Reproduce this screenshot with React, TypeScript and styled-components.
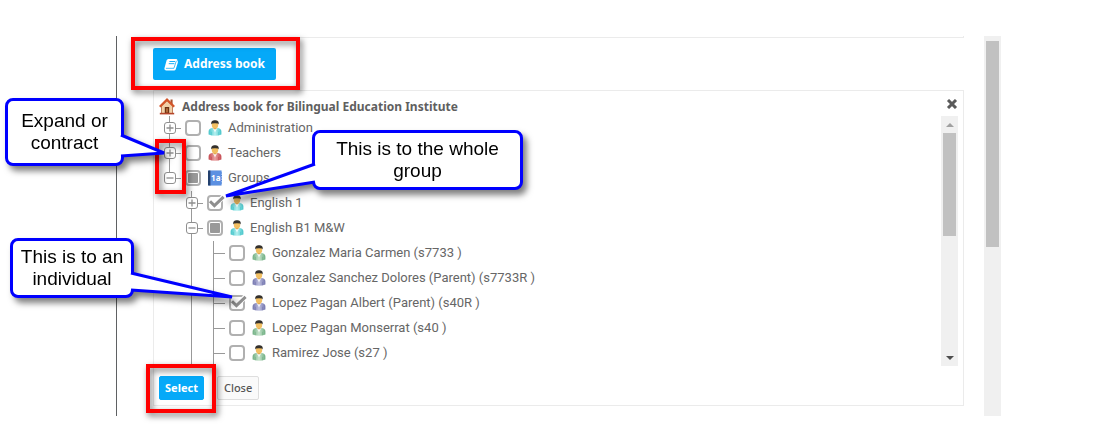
import React, { useId } from 'react';
import styled, { createGlobalStyle, css } from 'styled-components';

const GlobalStyle = createGlobalStyle`
  *, *::before, *::after { box-sizing: border-box; }
  body { margin: 0; background: #fff; }
`;

const headingFont = '"Noto Sans", "Open Sans", sans-serif';
const treeFont = 'Roboto, "Noto Sans", sans-serif';
const accent = '#05a9f8';
const line = '#ebebeb';
const guide = '#999';

const Page = styled.div`
  position: relative;
  padding: 36px 101px 31px 116px;
`;

const Frame = styled.div`
  display: flex;
  gap: 20px;
  padding-left: 36px;
  border-left: 1px solid #5f6163;
`;

const Main = styled.main`
  flex: 1;
  min-width: 0;
  padding-bottom: 10px;
`;

const Rule = styled.div`
  height: 2px;
  border-right: 1px solid ${line};
  border-bottom: 1px solid ${line};
`;

const AddressButton = styled.button`
  display: flex;
  align-items: center;
  gap: 6px;
  height: 32px;
  margin: 10px 0;
  padding: 0 11px;
  border: 0;
  border-radius: 2px;
  background: ${accent};
  color: #fff;
  font: 700 12px/16px ${headingFont};
  cursor: pointer;
`;

const Panel = styled.section`
  padding: 0 5px 5px;
  border: 1px solid ${line};
`;

const PanelHeader = styled.header`
  display: flex;
  align-items: center;
  gap: 7px;
  height: 25px;
  padding-top: 6px;
`;

const PanelTitle = styled.h1`
  flex: 1;
  margin: 0;
  color: #5f5f5f;
  font: 700 12px/20px ${headingFont};
`;

const CloseIconButton = styled.button`
  display: flex;
  align-items: center;
  height: 20px;
  padding: 0 0 6px;
  border: 0;
  background: none;
  cursor: pointer;
`;

const TreeArea = styled.div`
  display: flex;
`;

const Tree = styled.ul`
  flex: 1;
  margin: 0;
  padding: 0;
  list-style: none;
`;

const Row = styled.li`
  display: flex;
  align-items: center;
  height: 25px;
`;

type Guide = 'none' | 'line' | 'branch' | 'last';

const GuideCell = styled.span<{ $kind: Guide }>`
  display: flex;
  align-items: center;
  width: 22px;
  height: 25px;
  padding: 0 0 1px 5px;
  background-repeat: no-repeat;
  ${({ $kind }) =>
    $kind !== 'none' &&
    css`
      background-image: linear-gradient(${guide}, ${guide})${$kind !== 'line' && css`, linear-gradient(${guide}, ${guide})`};
      background-size: 1px ${$kind === 'last' ? '50%' : '100%'}, 11px 1px;
      background-position: 10px 0, 11px 12px;
    `}
`;

const Expander = styled.button`
  display: flex;
  align-items: center;
  justify-content: center;
  width: 12px;
  height: 12px;
  padding: 0;
  border: 1px solid #8f8f8f;
  border-radius: 3px;
  background: #fff;
  cursor: pointer;
`;

const CheckWrap = styled.span`
  position: relative;
  display: flex;
  margin: 0 6px 1px 4px;
`;

const CheckBox = styled.input<{ $partial: boolean }>`
  appearance: none;
  width: 16px;
  height: 16px;
  margin: 0;
  border: 2px solid #b0b0b0;
  border-radius: 4px;
  background: #fff;
  ${({ $partial }) =>
    $partial &&
    css`
      padding: 1px;
      background: #999 content-box;
    `}
`;

const CheckMark = styled.svg`
  position: absolute;
  top: 0;
  left: 0;
  overflow: visible;
  pointer-events: none;
`;

const RowLabel = styled.label`
  display: flex;
  align-items: center;
  gap: 5px;
  padding-bottom: 1px;
  color: #666;
  font: 400 13px/24px ${treeFont};
  white-space: nowrap;
`;

const ScrollTrack = styled.div<{ $start: number }>`
  display: flex;
  flex-direction: column;
  align-items: center;
  width: 17px;
  padding-top: ${({ $start }) => $start}px;
  background: #f0f0f0;
`;

const Thumb = styled.div<{ $share: number }>`
  width: 13px;
  height: ${({ $share }) => $share}%;
  background: #c1c1c1;
`;

const Arrow = styled.div<{ $down?: boolean }>`
  display: flex;
  align-items: center;
  height: 17px;
  ${({ $down }) => $down && 'margin-top: auto;'}
`;

const Footer = styled.footer`
  display: flex;
  gap: 13px;
  padding-top: 10px;
`;

const FooterButton = styled.button<{ $primary?: boolean }>`
  height: 24px;
  padding: 0 ${({ $primary }) => ($primary ? 5 : 6)}px;
  border: 1px solid ${({ $primary }) => ($primary ? accent : '#dedede')};
  border-radius: 2px;
  background: ${({ $primary }) => ($primary ? accent : '#fafafa')};
  color: ${({ $primary }) => ($primary ? '#fff' : '#555')};
  font: ${({ $primary }) => ($primary ? 700 : 500)} 11px/16px ${headingFont};
  cursor: pointer;
`;

const Highlight = styled.div<{ $x: number; $y: number; $w: number; $h: number }>`
  position: absolute;
  left: ${({ $x }) => $x}px;
  top: ${({ $y }) => $y}px;
  width: ${({ $w }) => $w}px;
  height: ${({ $h }) => $h}px;
  border: 4px solid #f00;
  filter: drop-shadow(2px 3px 3px rgba(0, 0, 0, 0.55));
  pointer-events: none;
`;

const CalloutBox = styled.aside<{ $x: number; $y: number; $w: number; $h: number }>`
  position: absolute;
  left: ${({ $x }) => $x}px;
  top: ${({ $y }) => $y}px;
  display: flex;
  justify-content: center;
  width: ${({ $w }) => $w}px;
  height: ${({ $h }) => $h}px;
  padding-top: ${({ $h }) => ($h > 60 ? 9 : 5)}px;
  border: 3px solid #00f;
  border-radius: 8px;
  background: #fff;
  color: #000;
  font: 400 19px/22px "Liberation Sans", Arial, sans-serif;
  text-align: center;
  white-space: pre-line;
  filter: drop-shadow(4px 5px 3px rgba(0, 0, 0, 0.5));
`;

const CalloutTail = styled.svg`
  position: absolute;
  top: -3px;
  left: -3px;
  overflow: visible;
`;

const PERSON = {
  teal: ['#b4f0f0', '#45c4c9'],
  red: ['#eba3a3', '#c4484f'],
  green: ['#c8e4cd', '#6fae82'],
  indigo: ['#c0c1e0', '#7476ae'],
};
type Tone = keyof typeof PERSON;

function Person({ tone }: { tone: Tone }) {
  const [light, dark] = PERSON[tone];
  const id = useId();
  return (
    <svg width="16" height="16" viewBox="0 0 16 16" aria-hidden="true">
      <defs>
        <linearGradient id={id} x1="0" y1="0" x2="1" y2="0">
          <stop offset="0" stopColor={dark} />
          <stop offset=".5" stopColor={light} />
          <stop offset="1" stopColor={dark} />
        </linearGradient>
      </defs>
      <path d="M1.6 14.6V11.8Q1.6 8.6 5 8H11Q14.4 8.6 14.4 11.8V14.6Q8 17 1.6 14.6Z" fill={`url(#${id})`} />
      <path d="M4.4 11.8V15.2M11.6 11.8V15.2" stroke={dark} strokeWidth=".6" />
      <path d="M5.6 8H10.4L8.8 10.8L8 12.4L7.2 10.8Z" fill="#fff" opacity=".85" />
      <path d="M6.4 7H9.6V8.4L8 9.6L6.4 8.4Z" fill="#d39a48" />
      <ellipse cx="8" cy="4.9" rx="3.2" ry="3.6" fill="#f2bf62" />
      <path d="M4.3 4.6C3.8 1.3 5.4 .2 8 .2S12.2 1.3 11.7 4.6L11 3.6Q8 2.9 5 3.6Z" fill="#33302c" />
    </svg>
  );
}

function Book() {
  return (
    <svg width="16" height="16" viewBox="0 0 16 16" aria-hidden="true">
      <rect x="1" y=".5" width="14" height="15" rx="1" fill="#4f82d4" />
      <rect x="1" y=".5" width="2.6" height="15" rx=".6" fill="#24416e" />
      <path d="M3.6 1H14V15H3.6Z" fill="#5b90e2" />
      <path d="M14.5 1V15" stroke="#9bbcf0" strokeDasharray="1.5 1" />
      <text x="8.8" y="10.8" textAnchor="middle" fill="#fff" fontFamily="Noto Sans, sans-serif" fontSize="8" fontWeight="700">
        1a
      </text>
    </svg>
  );
}

function House() {
  return (
    <svg width="16" height="17" viewBox="0 0 16 17" aria-hidden="true">
      <path d="M11.5 1.5H13.6V6H11.5Z" fill="#a9532f" />
      <path d="M2.5 8L8 2.6L13.5 8V15.5H2.5Z" fill="#f0d0a8" stroke="#b4683e" strokeWidth=".8" />
      <path d="M.8 8.8L8 1.6L15.2 8.8" fill="none" stroke="#d4562a" strokeWidth="2.2" />
      <path d="M5.8 15.5V9H10.2V15.5Z" fill="#6e3314" />
      <path d="M7 14.4V10.2H9V14.4Z" fill="#b06a38" />
      <path d="M.8 15.6H15.2" stroke="#b5452a" strokeWidth="1.6" />
    </svg>
  );
}

type Node = {
  id: string;
  text: string;
  guides: Guide[];
  toggle?: 'plus' | 'minus';
  state?: 'checked' | 'partial';
  icon: Tone | 'book';
};

const nodes: Node[] = [
  { id: 'administration', text: 'Administration', guides: ['branch'], toggle: 'plus', icon: 'teal' },
  { id: 'teachers', text: 'Teachers', guides: ['branch'], toggle: 'plus', icon: 'red' },
  { id: 'groups', text: 'Groups', guides: ['last'], toggle: 'minus', state: 'partial', icon: 'book' },
  { id: 'english-1', text: 'English 1', guides: ['none', 'branch'], toggle: 'plus', state: 'checked', icon: 'teal' },
  { id: 'english-b1', text: 'English B1 M&W', guides: ['none', 'branch'], toggle: 'minus', state: 'partial', icon: 'teal' },
  { id: 's7733', text: 'Gonzalez Maria Carmen (s7733 )', guides: ['none', 'line', 'branch'], icon: 'green' },
  { id: 's7733r', text: 'Gonzalez Sanchez Dolores (Parent) (s7733R )', guides: ['none', 'line', 'branch'], icon: 'indigo' },
  { id: 's40r', text: 'Lopez Pagan Albert (Parent) (s40R )', guides: ['none', 'line', 'branch'], state: 'checked', icon: 'indigo' },
  { id: 's40', text: 'Lopez Pagan Monserrat (s40 )', guides: ['none', 'line', 'branch'], icon: 'green' },
  { id: 's27', text: 'Ramirez Jose (s27 )', guides: ['none', 'line', 'branch'], icon: 'green' },
];

function TreeRow({ node }: { node: Node }) {
  return (
    <Row>
      {node.guides.map((kind, i) => (
        <GuideCell key={i} $kind={kind}>
          {node.toggle && i === node.guides.length - 1 && (
            <Expander type="button" aria-label={`${node.toggle === 'plus' ? 'Expand' : 'Contract'} ${node.text}`}>
              <svg width="8" height="8" viewBox="0 0 8 8" aria-hidden="true">
                <path d={node.toggle === 'plus' ? 'M.5 4H7.5M4 .5V7.5' : 'M.5 4H7.5'} stroke="#8f8f8f" strokeWidth="1.3" />
              </svg>
            </Expander>
          )}
        </GuideCell>
      ))}
      <CheckWrap>
        <CheckBox
          type="checkbox"
          id={node.id}
          defaultChecked={node.state === 'checked'}
          $partial={node.state === 'partial'}
        />
        {node.state === 'checked' && (
          <CheckMark width="16" height="16" viewBox="0 0 16 16" aria-hidden="true">
            <path d="M3.4 6.6L7.4 10.6L16.4 1.8" fill="none" stroke="#fff" strokeWidth="5" />
            <path d="M3 6.2L7.4 10.6L16.6 1.8" fill="none" stroke="#8f8f8f" strokeWidth="3" />
          </CheckMark>
        )}
      </CheckWrap>
      <RowLabel htmlFor={node.id}>
        {node.icon === 'book' ? <Book /> : <Person tone={node.icon} />}
        {node.text}
      </RowLabel>
    </Row>
  );
}

type CalloutProps = { x: number; y: number; w: number; h: number; tail: string; text: string };

function Callout({ x, y, w, h, tail, text }: CalloutProps) {
  return (
    <CalloutBox $x={x} $y={y} $w={w} $h={h}>
      <CalloutTail width={w} height={h} aria-hidden="true">
        <path d={tail} fill="#fff" stroke="#00f" strokeWidth="3" />
      </CalloutTail>
      {text}
    </CalloutBox>
  );
}

export default function App() {
  return (
    <>
      <GlobalStyle />
      <Page>
        <Frame>
          <Main>
            <Rule />
            <AddressButton type="button">
              <svg width="14" height="13" viewBox="0 0 15 13" aria-hidden="true">
                <path d="M4.6 .5H13.2Q14.6 .6 14.2 2L14.8 3.2Q15 4 14.7 4.8L12.5 11.8Q12 13 10.8 13H2.4Q.3 12.8 .4 10.8L2.8 2Q3.2 .6 4.6 .5Z" fill="#fff" />
                <path d="M5.8 3.3H11.8M5.1 5.6H11.1" stroke={accent} strokeWidth="1" />
                <path d="M2 10.6H10.6L13.2 2.6" fill="none" stroke={accent} strokeWidth=".8" />
              </svg>
              Address book
            </AddressButton>
            <Panel>
              <PanelHeader>
                <House />
                <PanelTitle>Address book for Bilingual Education Institute</PanelTitle>
                <CloseIconButton type="button" aria-label="Close address book">
                  <svg width="12" height="10" viewBox="0 0 12 10" aria-hidden="true">
                    <path d="M2 1L10 9M10 1L2 9" stroke="#5a5a5a" strokeWidth="3" />
                  </svg>
                </CloseIconButton>
              </PanelHeader>
              <TreeArea>
                <Tree>
                  {nodes.map((node) => (
                    <TreeRow key={node.id} node={node} />
                  ))}
                </Tree>
                <ScrollTrack $start={0} aria-hidden="true">
                  <Arrow>
                    <svg width="8" height="4" viewBox="0 0 8 4">
                      <path d="M0 4L4 0L8 4Z" fill="#a0a0a0" />
                    </svg>
                  </Arrow>
                  <Thumb $share={41} />
                  <Arrow $down>
                    <svg width="8" height="4" viewBox="0 0 8 4">
                      <path d="M0 0H8L4 4Z" fill="#4d4d4d" />
                    </svg>
                  </Arrow>
                </ScrollTrack>
              </TreeArea>
              <Footer>
                <FooterButton type="button" $primary>
                  Select
                </FooterButton>
                <FooterButton type="button">Close</FooterButton>
              </Footer>
            </Panel>
          </Main>
          <ScrollTrack $start={5} aria-hidden="true">
            <Thumb $share={55} />
          </ScrollTrack>
        </Frame>

        <Highlight $x={131} $y={37} $w={169} $h={53} />
        <Highlight $x={155} $y={139} $w={31} $h={55} />
        <Highlight $x={146} $y={364} $w={70} $h={49} />

        <Callout x={5} y={98} w={119} h={68} tail="M116 37L159 55L116 58" text={'Expand or\ncontract'} />
        <Callout x={10} y={238} w={124} h={60} tail="M121 35L222 59L121 52" text={'This is to an\nindividual'} />
        <Callout x={312} y={130} w={211} h={60} tail="M3 34L-86 66L3 52" text={'This is to the whole\ngroup'} />
      </Page>
    </>
  );
}
